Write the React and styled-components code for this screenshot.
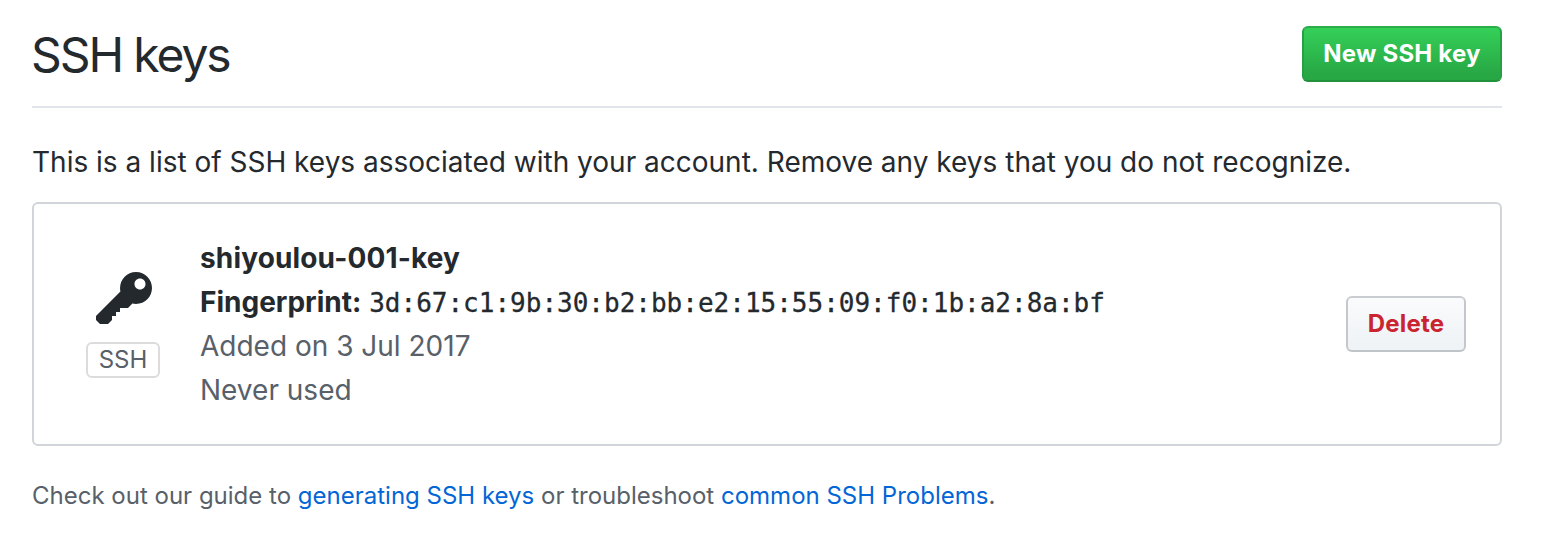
import React from "react";
import styled, { createGlobalStyle } from "styled-components";

const GlobalStyle = createGlobalStyle`
  * { box-sizing: border-box; }
  body { margin: 0; background: #fff; color: #24292e; font: 400 28px/44px Inter, sans-serif; }
`;
const Page = styled.main`
  width: 1552px; height: 554px; padding: 26px 50px 0 32px; overflow: hidden;
`;
const Header = styled.header`
  display: flex; justify-content: space-between; align-items: flex-start;
  height: 82px; border-bottom: 2px solid #e1e4e8;
`;
const Title = styled.h1`
  margin: 0 0 0 -1px; font-size: 48px; font-weight: 400; line-height: 57px; letter-spacing: -2.1px;
`;
const Button = styled.button`
  width: ${(p) => p.$width}px; height: 56px; padding: 0; border-radius: 6px;
  font: 700 24px/50px Inter, sans-serif; letter-spacing: 0.2px; white-space: nowrap;
  border: 2px solid;
  border-color: ${(p) => (p.$primary ? "#2bad4a #279f43 #23903c" : "#c9cdd2 #c4c8cd #bfc4c9")};
  color: ${(p) => (p.$primary ? "#fff" : "#cb2431")};
  background: ${(p) => (p.$primary ? "linear-gradient(#34d058, #28a745 90%)" : "linear-gradient(#fafbfc, #eff3f6 90%)")};
`;
const Intro = styled.p`margin: 32px 0 18px; white-space: nowrap;`;
const Card = styled.section`
  display: flex; align-items: center; height: 244px; padding: 0 34px 0 52px;
  border: 2px solid #d1d5da; border-radius: 6px;
`;
const Kind = styled.div`
  display: flex; flex-direction: column; align-items: flex-start; gap: 10px;
  width: 74px; margin: 0 40px 2px 0;
`;
const KeyIcon = styled.svg`
  display: block; width: 56px; height: 64px; margin-left: 10px; fill: #24292e;
`;
const Badge = styled.span`
  width: 74px; height: 36px; border: 2px solid #dcdcdc; border-radius: 6px;
  font-size: 24px; line-height: 32px; text-align: center; color: #586069;
`;
const Details = styled.div`flex: 1; white-space: nowrap;`;
const Line = styled.div`height: 44px; color: ${(p) => (p.$muted ? "#586069" : "#24292e")};`;
const KeyName = styled.strong`font-weight: 700; letter-spacing: 0.15px;`;
const Label = styled.strong`font-weight: 700;`;
const Code = styled.code`
  font: 400 26px/44px "DejaVu Sans Mono", monospace;
  -webkit-text-stroke: 0.3px currentColor;
`;
const Footer = styled.p`margin: 28px 0 0; font-size: 24px; color: #586069; white-space: nowrap;`;
const Link = styled.a`color: #0366d6; text-decoration: none;`;

export default function App() {
  return (
    <>
      <GlobalStyle />
      <Page>
        <Header>
          <Title>SSH keys</Title>
          <Button $primary $width={200}>New SSH key</Button>
        </Header>
        <Intro>This is a list of SSH keys associated with your account. Remove any keys that you do not recognize.</Intro>
        <Card>
          <Kind>
            <KeyIcon viewBox="0 0 14 16" aria-hidden="true">
              <path fillRule="evenodd" d="M12.83 2.17C12.08 1.42 11.14 1.03 10 1c-1.13.03-2.08.42-2.83 1.17S6.04 3.86 6.01 5c0 .3.03.59.09.89L0 12v1l1 1h2l1-1v-1h1v-1h1v-1h2l1.09-1.11c.3.08.59.11.91.11 1.14-.03 2.08-.42 2.83-1.17S13.97 6.14 14 5c-.03-1.14-.42-2.08-1.17-2.83zM11 5.38c-.77 0-1.38-.61-1.38-1.38 0-.77.61-1.38 1.38-1.38.77 0 1.38.61 1.38 1.38 0 .77-.61 1.38-1.38 1.38z" />
            </KeyIcon>
            <Badge>SSH</Badge>
          </Kind>
          <Details>
            <Line><KeyName>shiyoulou-001-key</KeyName></Line>
            <Line><Label>Fingerprint:</Label> <Code>3d:67:c1:9b:30:b2:bb:e2:15:55:09:f0:1b:a2:8a:bf</Code></Line>
            <Line $muted>Added on 3 Jul 2017</Line>
            <Line $muted>Never used</Line>
          </Details>
          <Button $width={120}>Delete</Button>
        </Card>
        <Footer>
          Check out our guide to <Link>generating SSH keys</Link> or troubleshoot <Link>common SSH Problems</Link>.
        </Footer>
      </Page>
    </>
  );
}
